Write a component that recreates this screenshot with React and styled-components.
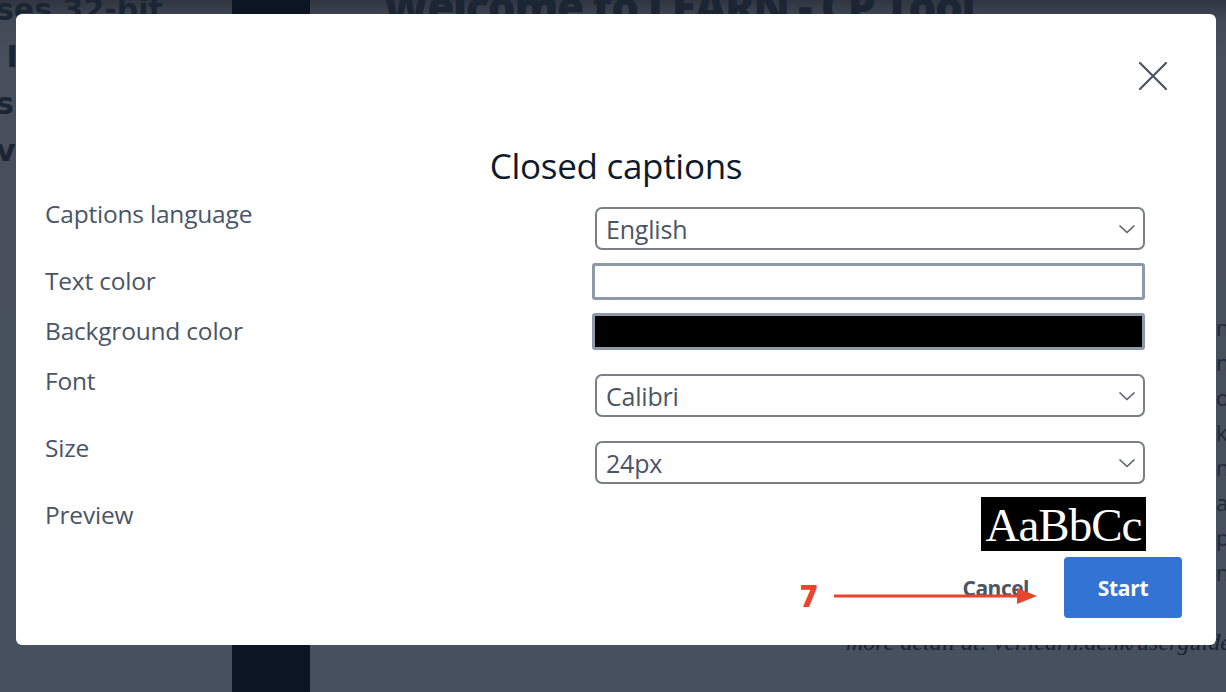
import styled, { createGlobalStyle } from "styled-components";

const GlobalStyle = createGlobalStyle`
  html, body {
    margin: 0;
    padding: 0;
    overflow: hidden;
  }
  body {
    font-family: "Open Sans", "Noto Sans", sans-serif;
    background: #474f5c;
  }
`;

/* page behind the dialog, already dimmed */
const Page = styled.div`
  width: 1226px;
  height: 692px;
  display: grid;
  grid-template-columns: 232px 78px 1fr;
  background: linear-gradient(#2f3642 0px, #434b58 22px, #474f5c 60px, #47505e 100%);
  overflow: hidden;
`;

const SideText = styled.div`
  margin-left: -4px;
  margin-top: -14px;
  font-family: "DejaVu Sans", sans-serif;
  font-weight: 700;
  font-size: 30px;
  line-height: 47px;
  color: #1c2534;
  white-space: nowrap;
`;

const DarkBar = styled.div`
  background: #0b1523;
`;

const Main = styled.div`
  display: flex;
  flex-direction: column;
  padding-left: 73px;
  color: #1c2534;
`;

const Heading = styled.div`
  font-family: "Open Sans", sans-serif;
  font-weight: 800;
  font-size: 44px;
  line-height: 44px;
  margin-top: -16px;
  letter-spacing: -1.5px;
  white-space: nowrap;
`;

const BodyText = styled.div`
  margin-top: 282px;
  margin-left: 833px;
  font-family: "Open Sans", sans-serif;
  font-size: 22px;
  line-height: 35px;
  white-space: nowrap;
  color: #1f2a3a;
`;

const Footnote = styled.div`
  margin-top: 38px;
  margin-left: 463px;
  font-family: "Liberation Serif", serif;
  font-style: italic;
  font-size: 24px;
  line-height: 28px;
  white-space: nowrap;
  color: #1a2131;
`;

const Overlay = styled.div`
  position: fixed;
  inset: 0;
  display: flex;
  align-items: flex-start;
  padding: 14px 0 0 16px;
`;

const Dialog = styled.div`
  position: relative;
  width: 1200px;
  height: 631px;
  box-sizing: border-box;
  background: #ffffff;
  border-radius: 6px;
  padding: 42px 71px 0 29px;
  display: flex;
  flex-direction: column;
`;

const CloseRow = styled.div`
  display: flex;
  justify-content: flex-end;
  margin-right: -28px;
`;

const CloseButton = styled.button`
  width: 40px;
  height: 40px;
  border: 0;
  padding: 0;
  background: transparent;
  display: grid;
  place-items: center;
  cursor: pointer;
`;

const Title = styled.h2`
  margin: 50px 0 10px;
  text-align: center;
  font-family: "Open Sans", sans-serif;
  font-weight: 400;
  font-size: 35px;
  line-height: 40px;
  color: #0e1a2b;
  padding-left: 42px;
  letter-spacing: -0.3px;
`;

const Row = styled.div`
  display: grid;
  grid-template-columns: 1fr 550px;
  align-items: start;
  margin-bottom: 13px;
`;

const Label = styled.label`
  margin-top: 3px;
  font-size: 24.5px;
  line-height: 30px;
  color: #4a5566;
  letter-spacing: -0.2px;
`;

const SelectBox = styled.div`
  position: relative;
  margin-top: 11px;
  height: 43px;
  box-sizing: border-box;
  border: 2px solid #7b7e84;
  border-radius: 7px;
  display: flex;
  align-items: center;
  padding: 0 9px;
  font-size: 25px;
  color: #4a5566;
  letter-spacing: -0.2px;
`;

const Chevron = styled.svg`
  margin-left: auto;
  margin-right: -2px;
`;

const ColorField = styled.div`
  height: 37px;
  box-sizing: border-box;
  margin-left: -3px;
  border: 3px solid #8e9aa7;
  border-radius: 3px;
  background: ${(p) => p.$fill};
`;

const PreviewCell = styled.div`
  display: flex;
  justify-content: flex-end;
`;

const PreviewBox = styled.div`
  width: 165px;
  height: 54px;
  margin-right: -1px;
  background: #000;
  color: #fff;
  font-family: "Liberation Serif", "Times New Roman", serif;
  font-size: 47px;
  line-height: 56px;
  text-align: center;
  letter-spacing: -1px;
  overflow: hidden;
`;

const Footer = styled.div`
  display: flex;
  justify-content: flex-end;
  align-items: center;
  gap: 17px;
  margin-top: -7px;
  margin-right: -37px;
`;

const TextButton = styled.button`
  border: 0;
  background: transparent;
  padding: 0 18px;
  font-family: "Open Sans", sans-serif;
  font-weight: 700;
  font-size: 21px;
  color: #4a5566;
  cursor: pointer;
  letter-spacing: -0.5px;
`;

const PrimaryButton = styled.button`
  width: 118px;
  height: 61px;
  border: 0;
  border-radius: 4px;
  background: #3273d3;
  color: #fff;
  font-family: "Open Sans", sans-serif;
  font-weight: 700;
  font-size: 21px;
  cursor: pointer;
  letter-spacing: -0.3px;
`;

const StepMark = styled.div`
  position: absolute;
  left: 784px;
  top: 567px;
  display: flex;
  align-items: center;
  gap: 16px;
  color: #e8452c;
  font-family: "Open Sans", sans-serif;
  font-weight: 800;
  font-size: 30px;
  line-height: 30px;
`;

function Select({ value }) {
  return (
    <SelectBox>
      {value}
      <Chevron width="18" height="10" viewBox="0 0 18 10">
        <path d="M1.5 1.5 L9 8.5 L16.5 1.5" fill="none" stroke="#5a5f66" strokeWidth="1.6" />
      </Chevron>
    </SelectBox>
  );
}

export default function App() {
  return (
    <>
      <GlobalStyle />
      <Page>
        <SideText>
          <div>ses 32-bit</div>
          <div>&nbsp;I</div>
          <div>s</div>
          <div>vi</div>
        </SideText>
        <DarkBar />
        <Main>
          <Heading>Welcome to LEARN - CP Tool</Heading>
          <BodyText>
            <div>na</div>
            <div>ng</div>
            <div>ou</div>
            <div>ka</div>
            <div>ng</div>
            <div>as</div>
            <div>pa</div>
            <div>ne</div>
          </BodyText>
          <Footnote>more detail at: ver.learn.ac.lk/userguide</Footnote>
        </Main>
      </Page>

      <Overlay>
        <Dialog role="dialog" aria-label="Closed captions">
          <CloseRow>
            <CloseButton type="button" aria-label="Close">
              <svg width="30" height="30" viewBox="0 0 30 30">
                <path d="M2 2 L28 28 M28 2 L2 28" stroke="#4b5563" strokeWidth="2.2" strokeLinecap="round" />
              </svg>
            </CloseButton>
          </CloseRow>
          <Title>Closed captions</Title>

          <Row>
            <Label>Captions language</Label>
            <Select value="English" />
          </Row>
          <Row>
            <Label>Text color</Label>
            <ColorField $fill="#ffffff" />
          </Row>
          <Row>
            <Label>Background color</Label>
            <ColorField $fill="#000000" />
          </Row>
          <Row>
            <Label>Font</Label>
            <Select value="Calibri" />
          </Row>
          <Row>
            <Label>Size</Label>
            <Select value="24px" />
          </Row>
          <Row>
            <Label>Preview</Label>
            <PreviewCell>
              <PreviewBox>AaBbCc</PreviewBox>
            </PreviewCell>
          </Row>

          <Footer>
            <TextButton type="button">Cancel</TextButton>
            <PrimaryButton type="button">Start</PrimaryButton>
          </Footer>

          <StepMark>
            7
            <svg width="203" height="24" viewBox="0 0 203 24">
              <path d="M0 12 H186" stroke="#e8452c" strokeWidth="3" />
              <path d="M183 4 L203 12 L183 20 Z" fill="#e8452c" />
            </svg>
          </StepMark>
        </Dialog>
      </Overlay>
    </>
  );
}
